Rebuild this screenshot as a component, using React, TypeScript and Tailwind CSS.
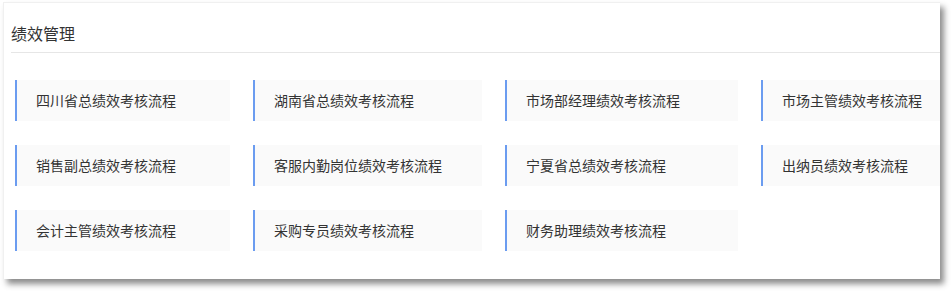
import React from "react";

const items = [
  "四川省总绩效考核流程",
  "湖南省总绩效考核流程",
  "市场部经理绩效考核流程",
  "市场主管绩效考核流程",
  "销售副总绩效考核流程",
  "客服内勤岗位绩效考核流程",
  "宁夏省总绩效考核流程",
  "出纳员绩效考核流程",
  "会计主管绩效考核流程",
  "采购专员绩效考核流程",
  "财务助理绩效考核流程",
];

export default function App() {
  return (
    <div
      className="w-[952px] h-[293px] bg-white overflow-hidden pt-[2px] pl-[3px]"
      style={{ fontFamily: '"Noto Sans CJK SC", "Noto Sans", sans-serif' }}
    >
      <div className="w-[937px] h-[277px] bg-white border-t border-l border-[#f0f0f0] shadow-[4px_5px_6px_rgba(0,0,0,0.45)] overflow-hidden">
        <div className="pt-[18px] pl-[7px]">
          <div className="text-[16px] leading-[24px] text-[#333]">绩效管理</div>
          <div className="mt-[7px] h-px bg-[#e6e6e6]" />
        </div>
        <div className="pl-[11px] pt-[27px] grid grid-cols-[215px_229px_233px_1fr] gap-x-[23px] gap-y-[24px]">
          {items.map((t) => (
            <div
              key={t}
              className="h-[41px] flex items-center bg-[#fafafa] border-l-2 border-[#6b9cf0] pl-[19px] text-[14px] text-[#333] whitespace-nowrap"
            >
              {t}
            </div>
          ))}
        </div>
      </div>
    </div>
  );
}
